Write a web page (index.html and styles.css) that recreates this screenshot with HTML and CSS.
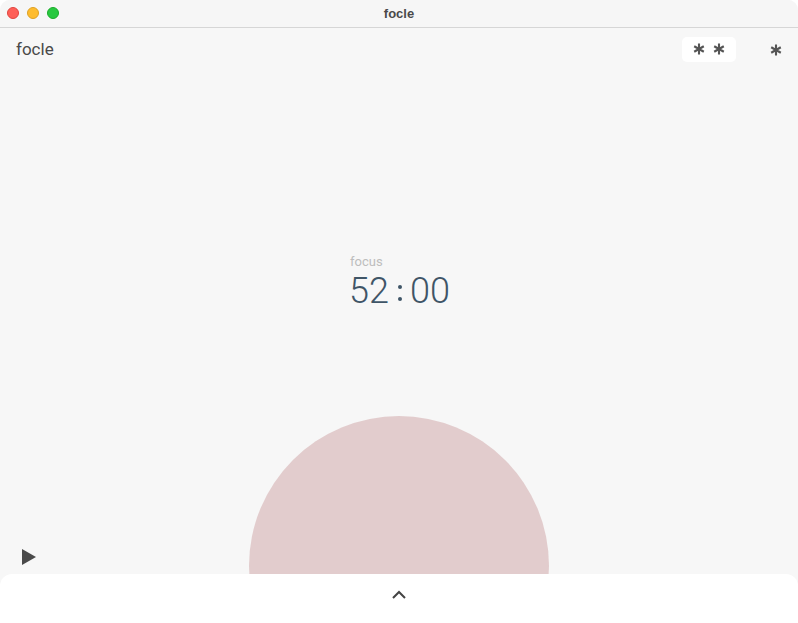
FILE: index.html
```html
<!DOCTYPE html>
<html>
<head>
<meta charset="utf-8">
<link rel="stylesheet" href="styles.css">
</head>
<body>
<div class="window">
  <div class="titlebar">
    <div class="lights">
      <span class="light red"></span>
      <span class="light yellow"></span>
      <span class="light green"></span>
    </div>
    <div class="title">focle</div>
  </div>
  <div class="content">
    <div class="topbar">
      <div class="brand">focle</div>
      <div class="actions">
        <div class="pill">
          <svg class="ast" width="12" height="12" viewBox="0 0 12 12"><path d="M6 0.5 V11.5 M1.2 3.25 L10.8 8.75 M1.2 8.75 L10.8 3.25" stroke="#555" stroke-width="2.1" fill="none"/></svg>
          <svg class="ast" width="12" height="12" viewBox="0 0 12 12"><path d="M6 0.5 V11.5 M1.2 3.25 L10.8 8.75 M1.2 8.75 L10.8 3.25" stroke="#555" stroke-width="2.1" fill="none"/></svg>
        </div>
        <svg class="ast star" width="12" height="12" viewBox="0 0 12 12"><path d="M6 0.5 V11.5 M1.2 3.25 L10.8 8.75 M1.2 8.75 L10.8 3.25" stroke="#555" stroke-width="2.1" fill="none"/></svg>
      </div>
    </div>
    <div class="timer">
      <div class="label">focus</div>
      <div class="time"><span>52</span><span class="colon"><i></i><i></i></span><span>00</span></div>
    </div>
    <div class="circle"></div>
    <svg class="play" width="14" height="16" viewBox="0 0 14 16"><path d="M0 0 L14 8 L0 16 Z" fill="#4a4a4a"/></svg>
    <div class="drawer">
      <svg class="chev" width="16" height="10" viewBox="0 0 16 10"><path d="M2 8 L8 2 L14 8" fill="none" stroke="#444" stroke-width="2"/></svg>
    </div>
  </div>
</div>
</body>
</html>
```

FILE: styles.css
```css
html, body { margin: 0; padding: 0; background: #ffffff; }
body { font-family: Roboto, "Liberation Sans", sans-serif; }
.window {
  width: 798px; height: 623px; overflow: hidden;
  border-radius: 10px 10px 0 0;
  background: #f7f7f7;
  display: flex; flex-direction: column;
}
.titlebar {
  height: 27px; flex: none; position: relative;
  background: #f6f6f6;
  border-bottom: 1px solid #d6d6d6;
  display: flex; align-items: center; justify-content: center;
}
.lights { position: absolute; left: 7px; top: 7px; display: flex; gap: 8px; }
.light { width: 12px; height: 12px; border-radius: 50%; box-sizing: border-box; }
.red { background: #fe5f57; border: 0.5px solid #e0443e; }
.yellow { background: #febc2e; border: 0.5px solid #dea123; }
.green { background: #28c840; border: 0.5px solid #1aab29; }
.title { font-family: "Liberation Sans", Arial, sans-serif; font-weight: bold; font-size: 13px; color: #4a4a4a; }
.content { flex: 1; position: relative; overflow: hidden; }
.topbar {
  display: flex; justify-content: space-between; align-items: center;
  padding: 8px 16px 0 16px; height: 26px;
}
.brand { font-size: 17px; color: #4a4a4a; margin-top: -1px; }
.actions { display: flex; align-items: center; gap: 34px; }
.pill {
  background: #ffffff; border-radius: 5px; width: 54px; height: 25px;
  display: flex; align-items: center; justify-content: center; gap: 8px;
}
.ast { display: block; }
.star { margin-top: 1px; }
.timer { position: absolute; left: 349px; top: 226px; }
.label { font-size: 13px; color: #bdbdbd; margin-left: 1px; }
.time { font-size: 36px; font-weight: 300; color: #3f5567; display: flex; align-items: center; line-height: 44px; }
.colon { display: flex; flex-direction: column; justify-content: space-between; height: 16px; width: 4px; margin: 4px 8px 0 9px; }
.colon i { display: block; width: 4px; height: 4px; border-radius: 50%; background: #3f5567; }
.circle {
  position: absolute; left: 249px; top: 388px; width: 300px; height: 300px;
  border-radius: 50%; background: #e2cccd;
}
.play { position: absolute; left: 22px; top: 521px; }
.drawer {
  position: absolute; left: 0; right: 0; top: 546px; bottom: 0;
  background: #ffffff; border-radius: 12px 12px 0 0;
  display: flex; justify-content: center; padding-top: 16px;
}
.chev { display: block; }
```
